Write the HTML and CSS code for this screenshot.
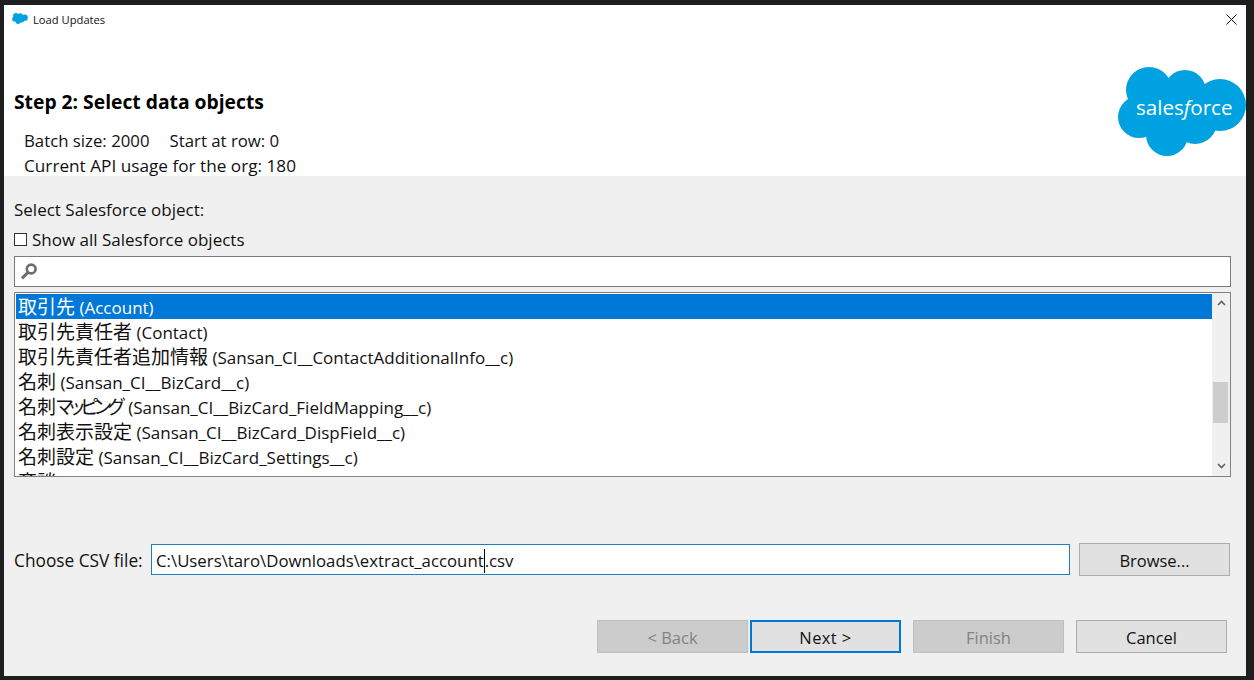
FILE: index.html
```html
<!DOCTYPE html>
<html lang="ja">
<head>
<meta charset="utf-8">
<title>Load Updates</title>
<link rel="stylesheet" href="styles.css">
</head>
<body>
<div class="window">
  <div class="top">
    <div class="titlebar">
      <svg class="app-icon" viewBox="0 0 128 90" aria-hidden="true"><use href="#cloud"/></svg>
      <span class="title">Load Updates</span>
      <svg class="close" viewBox="0 0 11 11" aria-hidden="true"><path d="M.5.5l10 10M10.5.5l-10 10"/></svg>
    </div>
    <div class="banner">
      <div class="banner-text">
        <h1 class="step">Step 2: Select data objects</h1>
        <div class="info">
          <div class="info-line batch"><span>Batch size: 2000</span><span>Start at row: 0</span></div>
          <div class="info-line">Current API usage for the org: 180</div>
        </div>
      </div>
      <svg class="logo" viewBox="0 0 128 90" role="img" aria-label="salesforce">
        <defs>
          <g id="cloud" fill="#00a1e0">
            <circle cx="31" cy="23" r="23"/>
            <circle cx="67" cy="24" r="21"/>
            <circle cx="102" cy="38" r="26"/>
            <circle cx="21" cy="50" r="21"/>
            <circle cx="49" cy="68" r="21"/>
            <circle cx="77" cy="55" r="22"/>
            <rect x="22" y="20" width="80" height="42"/>
          </g>
        </defs>
        <use href="#cloud"/>
        <text class="logo-text" x="18" y="48">sales<tspan class="logo-f">f</tspan>orce</text>
      </svg>
    </div>
  </div>
  <div class="main">
    <div class="select-label">Select Salesforce object:</div>
    <label class="check-row"><span class="checkbox"></span><span>Show all Salesforce objects</span></label>
    <div class="search">
      <svg class="search-icon" viewBox="0 0 17 17" aria-hidden="true"><circle cx="11.2" cy="6" r="4.4"/><path class="handle" d="M8 9.4L2 15.4"/></svg>
    </div>
    <div class="listbox">
      <ul class="rows">
        <li class="row selected"><span class="ja">取引先</span> (Account)</li>
        <li class="row"><span class="ja">取引先責任者</span> (Contact)</li>
        <li class="row"><span class="ja">取引先責任者追加情報</span> (Sansan_CI__ContactAdditionalInfo__c)</li>
        <li class="row"><span class="ja">名刺</span> (Sansan_CI__BizCard__c)</li>
        <li class="row"><span class="ja">名刺<span class="kana">マッピング</span></span> (Sansan_CI__BizCard_FieldMapping__c)</li>
        <li class="row"><span class="ja">名刺表示設定</span> (Sansan_CI__BizCard_DispField__c)</li>
        <li class="row"><span class="ja">名刺設定</span> (Sansan_CI__BizCard_Settings__c)</li>
        <li class="row"><span class="ja">商談</span></li>
      </ul>
      <div class="scrollbar">
        <svg class="arrow" viewBox="0 0 9 6" aria-hidden="true"><path d="M1 5l3.5-3.5L8 5"/></svg>
        <div class="track"><div class="thumb"></div></div>
        <svg class="arrow" viewBox="0 0 9 6" aria-hidden="true"><path d="M1 1l3.5 3.5L8 1"/></svg>
      </div>
    </div>
    <div class="file-row">
      <span class="file-label">Choose CSV file:</span>
      <div class="file-input">C:\Users\taro\Downloads\extract_account<span class="caret"></span>.csv</div>
      <button class="btn browse" type="button">Browse...</button>
    </div>
    <div class="actions">
      <button class="btn disabled" type="button">&lt; Back</button>
      <button class="btn default" type="button">Next &gt;</button>
      <button class="btn disabled finish" type="button">Finish</button>
      <button class="btn cancel" type="button">Cancel</button>
    </div>
  </div>
</div>
</body>
</html>
```
FILE: styles.css
```css
* { box-sizing: border-box; }
html, body { margin: 0; height: 100%; }
body {
  background: #1e1e1e;
  padding: 5px 8px 4px 4px;
  overflow: hidden;
  font-family: "Open Sans", "Noto Sans CJK JP", sans-serif;
  font-size: 17px;
  color: #111;
}
.window {
  height: 671px;
  display: flex;
  flex-direction: column;
  background: #f0f0f0;
}
.top { background: #fff; height: 171px; flex: none; }
.titlebar {
  height: 29px;
  display: flex;
  align-items: center;
  padding: 0 9px 0 8px;
}
.app-icon { width: 16px; height: 11px; margin-right: 5px; margin-top: -3px; }
.title { font-size: 11.2px; flex: 1; }
.close { width: 11px; height: 11px; stroke: #111; fill: none; stroke-width: 1; }
.banner { display: flex; justify-content: space-between; height: 142px; }
.banner-text { padding: 56px 0 0 10px; }
.step { margin: 0; font-size: 19.3px; line-height: 24px; font-weight: 700; color: #000; }
.info { padding: 14px 0 0 10px; font-size: 17.2px; }
.info-line { height: 25px; line-height: 25px; display: flex; gap: 20px; white-space: nowrap; }
.info-line.batch { font-size: 16.8px; }
.logo { width: 128px; height: 90px; margin-top: 33px; flex: none; }
.logo-text { font-family: "Open Sans", sans-serif; font-size: 20.6px; fill: #fff; }
.logo-f { font-style: italic; }
.main { flex: 1; padding: 0 15px 0 10px; }
.select-label { height: 25px; line-height: 25px; margin-top: 21px; }
.check-row { display: flex; align-items: center; height: 25px; margin-top: 5px; }
.checkbox { width: 13px; height: 13px; border: 1px solid #333; background: #fff; margin-right: 5px; }
.search {
  height: 31px;
  margin: 4px 0 5px;
  background: #fff;
  border: 1px solid #7a7a7a;
  display: flex;
  align-items: center;
  padding-left: 5px;
}
.search-icon { width: 17px; height: 17px; fill: none; stroke: #6d6d6d; stroke-width: 2.6; }
.handle { stroke-width: 3; }
.listbox {
  height: 185px;
  border: 1px solid #828282;
  background: #fff;
  display: flex;
  overflow: hidden;
}
.rows { list-style: none; margin: 0; padding: 1px 0 0 1px; flex: 1; min-width: 0; height: 100%; overflow: hidden; }
.row { height: 25px; line-height: 27px; padding-left: 2px; white-space: nowrap; color: #111; }
.row.selected { background: #0078d7; color: #fff; }
.ja { font-family: "Noto Sans CJK JP", sans-serif; font-size: 19px; line-height: 1; }
.kana { font-feature-settings: "palt"; letter-spacing: -3.8px; margin-right: 3px; }
.scrollbar {
  width: 18px;
  background: #f0f0f0;
  display: flex;
  flex-direction: column;
  align-items: center;
  padding: 7px 0;
}
.arrow { width: 9px; height: 6px; flex: none; fill: none; stroke: #606060; stroke-width: 1.6; }
.track { flex: 1; width: 100%; padding-top: 76px; }
.thumb { height: 41px; background: #cdcdcd; width: 15px; margin-left: 1px; }
.file-row { display: flex; align-items: center; margin-top: 66px; height: 33px; }
.file-label { width: 137px; flex: none; white-space: nowrap; font-size: 17.3px; padding-top: 2px; }
.file-input {
  width: 919px;
  height: 31px;
  line-height: 31px;
  border: 1px solid #1f7fbf;
  background: #fff;
  padding-left: 4px;
  white-space: nowrap;
  flex: none;
  font-size: 16.8px;
}
.caret { display: inline-block; width: 1px; height: 24px; background: #000; vertical-align: -6px; }
.btn {
  font: inherit;
  font-size: 16.5px;
  color: #111;
  width: 151px;
  height: 33px;
  padding: 1px 0 0;
  background: #e1e1e1;
  border: 1px solid #adadad;
  flex: none;
}
.browse { margin-left: 9px; }
.actions { display: flex; margin-top: 44px; padding-left: 583px; }
.btn.disabled { background: #cccccc; border-color: #bfbfbf; color: #838383; }
.btn.default { border: 2px solid #0078d7; margin-left: 2px; letter-spacing: 0.4px; }
.btn.finish { margin-left: 12px; }
.btn.cancel { margin-left: 12px; }
```
